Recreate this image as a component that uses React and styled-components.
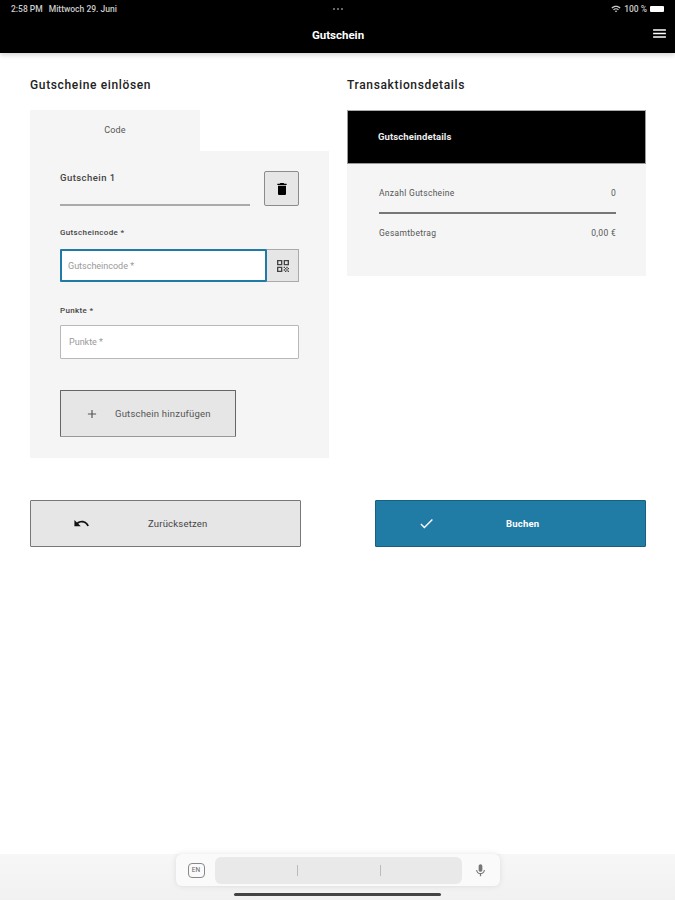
import React from 'react';
import styled, { createGlobalStyle } from 'styled-components';
import { MdAdd, MdCheck, MdDelete, MdMenu, MdMic, MdQrCode, MdUndo, MdWifi } from 'react-icons/md';

const GlobalStyle = createGlobalStyle`
    html, body {
        margin: 0;
        padding: 0;
        background: #fff;
        font-family: Roboto, "Liberation Sans", sans-serif;
    }
`;

const Page = styled.div`
    width: 675px;
    height: 900px;
    display: flex;
    flex-direction: column;
    overflow: hidden;
`;

const Header = styled.header`
    height: 53px;
    flex: none;
    background: #000;
    color: #fff;
    box-shadow: 0 2px 5px rgba(0, 0, 0, 0.18);
    padding: 3px 10px 0 11px;
    box-sizing: border-box;
    display: flex;
    flex-direction: column;
`;

const StatusBar = styled.div`
    height: 10px;
    margin-top: 1px;
    display: grid;
    grid-template-columns: 1fr auto 1fr;
    align-items: center;
    font-size: 8.5px;
    font-weight: 500;
    color: #ccc;
`;

const StatusLeft = styled.div`
    display: flex;
    gap: 6px;
`;

const Dots = styled.div`
    display: flex;
    gap: 2px;

    i {
        width: 2px;
        height: 2px;
        border-radius: 50%;
        background: #888;
    }
`;

const StatusRight = styled.div`
    display: flex;
    justify-content: flex-end;
    align-items: center;
    gap: 3px;
`;

const Battery = styled.div`
    width: 14px;
    height: 6px;
    margin-right: 1px;
    border-radius: 1px;
    background: #fff;
`;

const TitleBar = styled.div`
    flex: 1;
    display: flex;
    align-items: center;
    justify-content: center;
    position: relative;
    padding-top: 2px;
    font-size: 11.5px;
    font-weight: 700;
`;

const MenuButton = styled.span`
    position: absolute;
    right: -3px;
    top: 11px;
    display: flex;
`;

const Main = styled.main`
    padding: 24px 29px 0 30px;
    display: grid;
    grid-template-columns: 299px 299px;
    column-gap: 18px;
    align-items: start;
`;

const Column = styled.section`
    display: flex;
    flex-direction: column;
`;

const Heading = styled.h2`
    margin: 0 0 17px;
    height: 16px;
    line-height: 16px;
    font-size: 12px;
    font-weight: 500;
    letter-spacing: 0.65px;
    color: #222;
`;

const Tab = styled.div`
    width: 170px;
    height: 41px;
    background: #f5f5f5;
    display: flex;
    align-items: center;
    justify-content: center;
    font-size: 9px;
    letter-spacing: 0.2px;
    padding-bottom: 2px;
    box-sizing: border-box;
    color: #555;
`;

const FormPanel = styled.div`
    background: #f5f5f5;
    height: 307px;
    box-sizing: border-box;
    padding: 20px 30px 0;
    display: flex;
    flex-direction: column;
`;

const VoucherRow = styled.div`
    display: flex;
    justify-content: space-between;
    align-items: flex-start;
`;

const VoucherName = styled.div`
    width: 190px;
    height: 35px;
    box-sizing: border-box;
    padding-top: 1px;
    border-bottom: 2px solid #aaa;
    font-size: 9.5px;
    line-height: 12px;
    font-weight: 500;
    letter-spacing: 0.45px;
    color: #444;
`;

const IconButton = styled.button`
    width: 35px;
    height: 35px;
    padding: 0;
    border: 1.5px solid #8b8b8b;
    border-radius: 2px;
    background: #e6e6e6;
    display: flex;
    align-items: center;
    justify-content: center;
    color: #000;
`;

const FieldLabel = styled.label`
    display: block;
    margin-top: ${(p) => p.$top}px;
    height: 12px;
    line-height: 12px;
    font-size: 8px;
    font-weight: 500;
    letter-spacing: 0.35px;
    color: #444;
`;

const InputRow = styled.div`
    display: flex;
    height: ${(p) => p.$height}px;
    margin-top: ${(p) => p.$top}px;
`;

const TextInput = styled.input`
    flex: 1;
    min-width: 0;
    box-sizing: border-box;
    height: 100%;
    padding: 0 ${(p) => (p.$active ? 6 : 8)}px;
    background: #fff;
    border: ${(p) => (p.$active ? '2px solid #1f7ba6' : '1.5px solid #b8b8b8')};
    border-radius: 1px;
    outline: none;
    font-family: inherit;
    font-size: 9px;

    &::placeholder {
        color: #999;
        opacity: 1;
    }
`;

const ScanButton = styled.button`
    width: 32px;
    flex: none;
    padding: 0;
    border: 1.5px solid #aaa;
    border-left: 0;
    background: #e6e6e6;
    display: flex;
    align-items: center;
    justify-content: center;
    color: #444;
`;

const AddButton = styled.button`
    width: 176px;
    height: 47px;
    margin-top: 31px;
    padding: 0 0 0 24px;
    box-sizing: border-box;
    border: 1.5px solid #666;
    border-bottom-color: #999;
    border-radius: 1px;
    background: #e6e6e6;
    display: flex;
    align-items: center;
    gap: 16px;
    font-family: inherit;
    font-size: 9.5px;
    letter-spacing: 0.2px;
    color: #555;
`;

const DetailsHeader = styled.div`
    height: 54px;
    background: #000;
    border: 1px solid #999;
    border-top-color: #aaa;
    box-sizing: border-box;
    display: flex;
    align-items: center;
    padding: 0 0 1px 30px;
    font-size: 9.5px;
    font-weight: 700;
    letter-spacing: 0.1px;
    color: #eee;
`;

const DetailsBody = styled.div`
    height: 112px;
    background: #f5f5f5;
    box-sizing: border-box;
    padding: 20px 30px 0 32px;
    font-size: 8.5px;
    letter-spacing: 0.3px;
    color: #555;
`;

const DetailRow = styled.div`
    height: 17px;
    display: flex;
    justify-content: space-between;
    align-items: center;
`;

const Divider = styled.div`
    height: 2px;
    margin: 11px 0 10px;
    background: #777;
`;

const Actions = styled.div`
    display: flex;
    justify-content: space-between;
    padding: 42px 29px 0 30px;
`;

const ActionButton = styled.button`
    width: 271px;
    height: 47px;
    box-sizing: border-box;
    padding: 0 0 0 42px;
    border: ${(p) => (p.$primary ? '1px solid #17607f' : '1.5px solid #777')};
    border-radius: 1px;
    background: ${(p) => (p.$primary ? '#207ba5' : '#e6e6e6')};
    color: ${(p) => (p.$primary ? '#fff' : '#444')};
    display: flex;
    align-items: center;
    font-family: inherit;
    font-size: 9.5px;
    font-weight: ${(p) => (p.$primary ? 700 : 400)};
    letter-spacing: 0.2px;

    svg {
        color: ${(p) => (p.$primary ? '#fff' : '#111')};
        flex: none;
    }
`;

const ActionLabel = styled.span`
    margin-left: ${(p) => p.$gap}px;
`;

const KeyboardBar = styled.footer`
    margin-top: auto;
    height: 46px;
    flex: none;
    background: linear-gradient(#f7f7f7, #f1f1f1);
    position: relative;
    display: flex;
    justify-content: center;
`;

const ShortcutBar = styled.div`
    width: 324px;
    height: 32px;
    box-sizing: border-box;
    background: #fafafa;
    border-radius: 6px;
    box-shadow: 0 0 6px rgba(0, 0, 0, 0.1);
    display: flex;
    align-items: center;
    padding: 0 12px;
    justify-content: space-between;
    color: #777;
`;

const LangKey = styled.span`
    width: 15px;
    height: 13px;
    border: 1px solid #888;
    border-radius: 4px;
    font-size: 6.5px;
    line-height: 13px;
    text-align: center;
    color: #666;
`;

const Suggestions = styled.div`
    width: 247px;
    height: 27px;
    border-radius: 6px;
    background: #e9e9e9;
    display: grid;
    grid-template-columns: repeat(3, 1fr);
    align-items: center;

    span {
        height: 11px;
        border-left: 1px solid #bbb;
    }

    span:first-child {
        border-left: 0;
    }
`;

const HomeIndicator = styled.div`
    position: absolute;
    left: 234px;
    bottom: 4px;
    width: 207px;
    height: 3px;
    border-radius: 2px;
    background: #444;
`;

export default function App() {
    return (
        <Page>
            <GlobalStyle />
            <Header>
                <StatusBar>
                    <StatusLeft>
                        <span>2:58 PM</span>
                        <span>Mittwoch 29. Juni</span>
                    </StatusLeft>
                    <Dots><i /><i /><i /></Dots>
                    <StatusRight>
                        <MdWifi size={10} />
                        <span>100 %</span>
                        <Battery />
                    </StatusRight>
                </StatusBar>
                <TitleBar>
                    Gutschein
                    <MenuButton><MdMenu size={17} /></MenuButton>
                </TitleBar>
            </Header>
            <Main>
                <Column>
                    <Heading>Gutscheine einlösen</Heading>
                    <Tab>Code</Tab>
                    <FormPanel>
                        <VoucherRow>
                            <VoucherName>Gutschein 1</VoucherName>
                            <IconButton><MdDelete size={16} /></IconButton>
                        </VoucherRow>
                        <FieldLabel $top={21}>Gutscheincode *</FieldLabel>
                        <InputRow $height={33} $top={10}>
                            <TextInput $active placeholder="Gutscheincode *" />
                            <ScanButton><MdQrCode size={16} /></ScanButton>
                        </InputRow>
                        <FieldLabel $top={23}>Punkte *</FieldLabel>
                        <InputRow $height={34} $top={8}>
                            <TextInput placeholder="Punkte *" />
                        </InputRow>
                        <AddButton><MdAdd size={14} />Gutschein hinzufügen</AddButton>
                    </FormPanel>
                </Column>
                <Column>
                    <Heading>Transaktionsdetails</Heading>
                    <DetailsHeader>Gutscheindetails</DetailsHeader>
                    <DetailsBody>
                        <DetailRow><span>Anzahl Gutscheine</span><span>0</span></DetailRow>
                        <Divider />
                        <DetailRow><span>Gesamtbetrag</span><span>0,00 €</span></DetailRow>
                    </DetailsBody>
                </Column>
            </Main>
            <Actions>
                <ActionButton>
                    <MdUndo size={17} />
                    <ActionLabel $gap={58}>Zurücksetzen</ActionLabel>
                </ActionButton>
                <ActionButton $primary>
                    <MdCheck size={17} />
                    <ActionLabel $gap={71}>Buchen</ActionLabel>
                </ActionButton>
            </Actions>
            <KeyboardBar>
                <ShortcutBar>
                    <LangKey>EN</LangKey>
                    <Suggestions><span /><span /><span /></Suggestions>
                    <MdMic size={15} />
                </ShortcutBar>
                <HomeIndicator />
            </KeyboardBar>
        </Page>
    );
}
